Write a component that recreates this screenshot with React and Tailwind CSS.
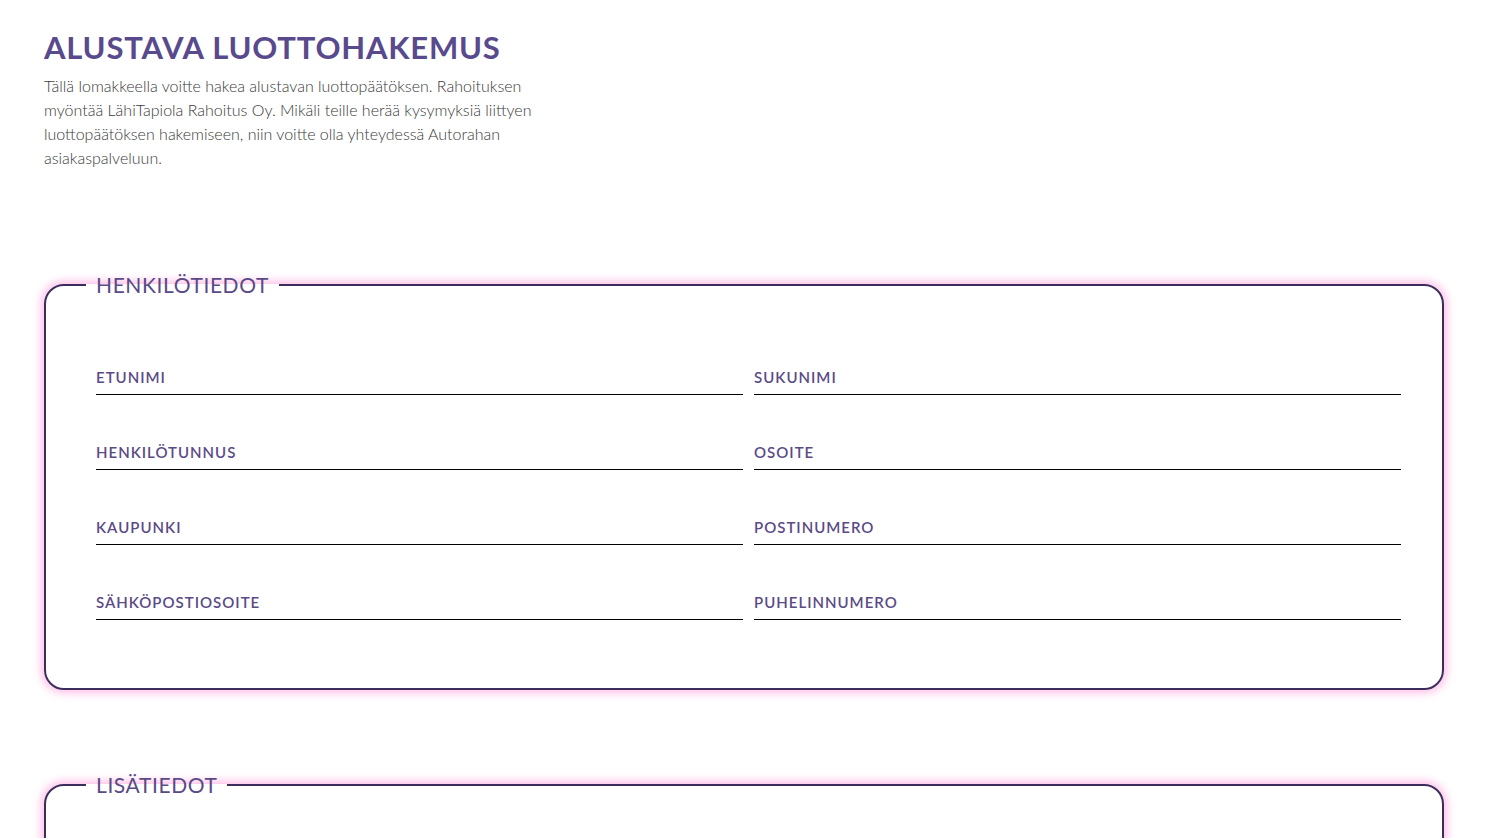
import React from "react";

const personFields = [
  ["ETUNIMI", "SUKUNIMI"],
  ["HENKILÖTUNNUS", "OSOITE"],
  ["KAUPUNKI", "POSTINUMERO"],
  ["SÄHKÖPOSTIOSOITE", "PUHELINNUMERO"],
];

const Field = ({ label }) => (
  <label className="flex h-[46px] items-end border-b border-black pb-[8px]">
    <span className="text-[15px] font-semibold leading-[18px] tracking-[1px] text-[#5a4a86]">
      {label}
    </span>
  </label>
);

const Section = ({ title, children }) => (
  <fieldset className="w-[1400px] rounded-[20px] border-2 border-[#3d2d5c] bg-white shadow-[0_0_9px_3px_rgba(255,175,225,0.8)]">
    <legend className="ml-[40px] px-[10px] text-[21px] leading-[24px] tracking-[0.6px] text-[#5a4a86]">
      {title}
    </legend>
    {children}
  </fieldset>
);

const App = () => {
  return (
    <div
      className="min-h-screen bg-white px-[44px] pt-[28px]"
      style={{ fontFamily: "Lato, 'Noto Sans', sans-serif" }}
    >
      <h1 className="text-[31px] font-bold leading-[38px] tracking-[0.8px] text-[#584a8c]">
        ALUSTAVA LUOTTOHAKEMUS
      </h1>
      <p className="mt-[8px] w-[540px] text-[16px] font-light leading-[24px] text-[#3a3a3a]">
        Tällä lomakkeella voitte hakea alustavan luottopäätöksen. Rahoituksen
        myöntää LähiTapiola Rahoitus Oy. Mikäli teille herää kysymyksiä
        liittyen luottopäätöksen hakemiseen, niin voitte olla yhteydessä
        Autorahan asiakaspalveluun.
      </p>

      <div className="mt-[103px] flex flex-col gap-[83px] pb-[40px]">
        <Section title="HENKILÖTIEDOT">
          <div className="grid grid-cols-2 gap-x-[11px] gap-y-[29px] pb-[68px] pl-[50px] pr-[41px] pt-[52px]">
            {personFields.flat().map((f) => (
              <Field key={f} label={f} />
            ))}
          </div>
        </Section>

        <Section title="LISÄTIEDOT">
          <div className="h-[200px]" />
        </Section>
      </div>
    </div>
  );
};

export default App;
